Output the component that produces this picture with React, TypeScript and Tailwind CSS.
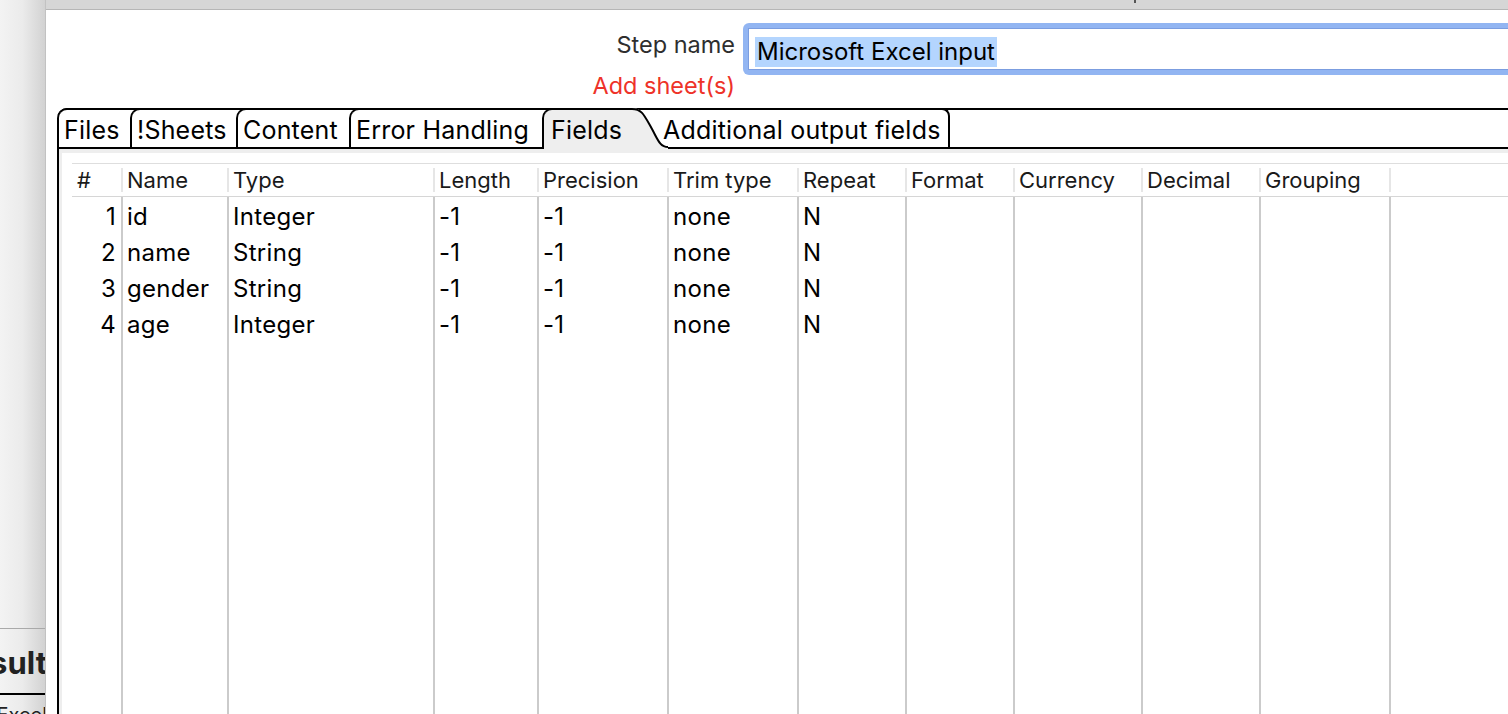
import React from "react";

const font = { fontFamily: 'Inter, "Liberation Sans", sans-serif' };

const cols: { h: string; w: string }[] = [
  { h: "#", w: "w-[49px]" },
  { h: "Name", w: "w-[106px]" },
  { h: "Type", w: "w-[206px]" },
  { h: "Length", w: "w-[104px]" },
  { h: "Precision", w: "w-[130px]" },
  { h: "Trim type", w: "w-[130px]" },
  { h: "Repeat", w: "w-[108px]" },
  { h: "Format", w: "w-[108px]" },
  { h: "Currency", w: "w-[128px]" },
  { h: "Decimal", w: "w-[118px]" },
  { h: "Grouping", w: "w-[130px]" },
  { h: "", w: "flex-1" },
];

const rows: string[][] = [
  ["1", "id", "Integer", "-1", "-1", "none", "N"],
  ["2", "name", "String", "-1", "-1", "none", "N"],
  ["3", "gender", "String", "-1", "-1", "none", "N"],
  ["4", "age", "Integer", "-1", "-1", "none", "N"],
];

function FieldsTable() {
  return (
    <div className="flex h-full border-t border-[#dedede]">
      {cols.map((c, i) => (
        <div key={i} className={`${c.w} shrink-0 flex flex-col`}>
          <div className="h-[33px] flex items-center border-b border-[#d6d6d6] text-[22px] text-[#1a1a1a] whitespace-nowrap">
            {i > 0 && <div className="w-[2px] h-[24px] bg-[#e6e6e6] shrink-0" />}
            <span className={i === 0 ? "pl-[5px]" : "pl-[4px]"}>{c.h}</span>
          </div>
          <div className={`flex-1 flex flex-col pt-[2px] ${i > 0 ? "border-l-2 border-[#cbcbcb]" : ""}`}>
            {rows.map((r, j) => (
              <div
                key={j}
                className={`h-[36px] shrink-0 flex items-center text-[24px] tracking-[0.3px] text-black whitespace-nowrap ${
                  i === 0 ? "justify-end pr-[5px]" : "pl-[4px]"
                }`}
              >
                {r[i] ?? ""}
              </div>
            ))}
          </div>
        </div>
      ))}
    </div>
  );
}

function Tab({ label, w }: { label: string; w: string }) {
  return (
    <div
      className={`${w} shrink-0 -mt-[2px] border-t-2 border-l-2 border-black rounded-tl-[10px] bg-white flex items-center pl-[5px] pt-[5px] text-[25px] tracking-[0.2px] text-black whitespace-nowrap`}
    >
      {label}
    </div>
  );
}

export default function App() {
  return (
    <div className="w-[1508px] h-[714px] overflow-hidden flex bg-white" style={font}>
      {/* left background strip */}
      <div className="w-[45px] shrink-0 flex flex-col bg-linear-to-r from-[#f3f3f3] via-[#ebebeb] to-[#d2d2d2]">
        <div className="h-[628px] shrink-0" />
        <div className="h-[65px] shrink-0 border-t border-[#a9a9a9] flex items-center justify-end overflow-hidden">
          <span className="text-[31px] font-bold text-[#222] whitespace-nowrap -mr-[2px] mt-[4px]">Result</span>
        </div>
        <div className="flex-1 border-t-2 border-black flex justify-end overflow-hidden">
          <span className="text-[20px] leading-[22px] text-[#222] whitespace-nowrap -mr-[2px] mt-[9px]">Excel</span>
        </div>
      </div>

      {/* dialog */}
      <div className="flex-1 flex flex-col border-l border-[#c2c2c2] min-w-0">
        <div className="h-[10px] shrink-0 bg-[#d6d6d6] border-b border-[#b6b6b6] flex">
          <div className="ml-[1088px] w-[2px] h-[3px] bg-[#555]" />
        </div>

        {/* step name area */}
        <div className="h-[98px] shrink-0 flex pt-[13px] overflow-hidden">
          <div className="w-[689px] shrink-0 flex flex-col items-end">
            <span className="mt-[9px] leading-[26px] text-[23.5px] text-[#2e2e2e]">Step name</span>
            <span className="mt-[15px] leading-[26px] text-[23.5px] text-[#ee3228]">Add sheet(s)</span>
          </div>
          <div className="ml-[8px] w-[800px] h-[52px] shrink-0 rounded-[6px] bg-[#92b5f2] p-[5px]">
            <div className="h-full bg-white border border-[#7b9de0] flex items-center pl-[6px]">
              <span className="mt-[5px] bg-[#b4d5fe] leading-[30px] px-[2px] text-[24px] text-black whitespace-nowrap">
                Microsoft Excel input
              </span>
            </div>
          </div>
        </div>

        {/* tab folder */}
        <div className="flex-1 flex flex-col ml-[11px] min-h-0">
          <div className="h-[41px] shrink-0 flex border-t-2 border-b-2 border-black rounded-tl-[10px]">
            <Tab label="Files" w="w-[73px]" />
            <Tab label="!Sheets" w="w-[106px]" />
            <Tab label="Content" w="w-[113px]" />
            <Tab label="Error Handling" w="w-[193px]" />
            <div className="w-[86px] shrink-0 -mt-[2px] -mb-[2px] border-t-2 border-l-2 border-black rounded-tl-[10px] bg-[#eeeeee] flex items-center pl-[7px] pt-[3px] text-[25px] tracking-[0.2px] text-black relative">
              Fields
            </div>
            <svg className="shrink-0 -mt-[2px] -mb-[2px] overflow-visible" width="40" height="41" viewBox="0 0 40 41">
              <path d="M0 0 L4 0 C14 0 16 6 24 20 C30 31 32 39 40 39 L40 41 L0 41 Z" fill="#eeeeee" />
              <path d="M-1 1 L4 1 C14 1 16 7 24 21 C30 32 32 39 40 39" fill="none" stroke="#000" strokeWidth="2" />
            </svg>
            <div className="w-[288px] shrink-0 -ml-[6px] -mt-[2px] border-t-2 border-r-2 border-black rounded-tr-[8px] flex items-center pl-[1px] pt-[5px] text-[25px] tracking-[0.2px] text-black whitespace-nowrap relative">
              Additional output fields
            </div>
            <div className="flex-1" />
          </div>

          <div className="flex-1 border-l-2 border-black bg-[#eeeeee] pt-[4px] pl-[3px] flex min-h-0">
            <div className="flex-1 bg-white pt-[10px] pl-[10px] min-w-0">
              <FieldsTable />
            </div>
          </div>
        </div>
      </div>
    </div>
  );
}
